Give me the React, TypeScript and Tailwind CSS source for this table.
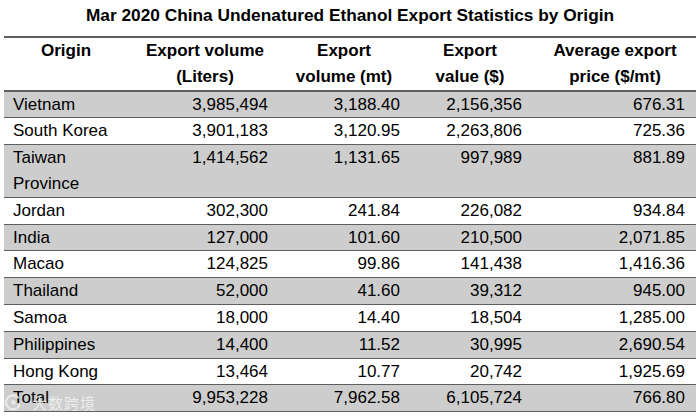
const rows = [
  ["Vietnam", "3,985,494", "3,188.40", "2,156,356", "676.31"],
  ["South Korea", "3,901,183", "3,120.95", "2,263,806", "725.36"],
  ["Taiwan Province", "1,414,562", "1,131.65", "997,989", "881.89"],
  ["Jordan", "302,300", "241.84", "226,082", "934.84"],
  ["India", "127,000", "101.60", "210,500", "2,071.85"],
  ["Macao", "124,825", "99.86", "141,438", "1,416.36"],
  ["Thailand", "52,000", "41.60", "39,312", "945.00"],
  ["Samoa", "18,000", "14.40", "18,504", "1,285.00"],
  ["Philippines", "14,400", "11.52", "30,995", "2,690.54"],
  ["Hong Kong", "13,464", "10.77", "20,742", "1,925.69"],
  ["Total", "9,953,228", "7,962.58", "6,105,724", "766.80"],
];

const App = () => {
  return (
    <div className="w-[700px] h-[417px] bg-white text-black font-['Liberation_Sans',Arial,sans-serif] relative overflow-hidden">
      <div className="h-[36px] text-center font-bold text-[17.3px] leading-[30px]">
        Mar 2020 China Undenatured Ethanol Export Statistics by Origin
      </div>

      <table className="ml-[4px] w-[692px] border-collapse table-fixed text-[17px] leading-[25.8px]">
        <colgroup>
          <col className="w-[124px]" />
          <col className="w-[154px]" />
          <col className="w-[124px]" />
          <col className="w-[128px]" />
          <col className="w-[162px]" />
        </colgroup>
        <thead>
          <tr className="border-t-2 border-b-2 border-[#5e5e5e] font-bold text-center align-top">
            <th className="h-[51px]">Origin</th>
            <th>
              Export volume
              <br />
              (Liters)
            </th>
            <th>
              Export
              <br />
              volume (mt)
            </th>
            <th>
              Export
              <br />
              value ($)
            </th>
            <th>
              Average export
              <br />
              price ($/mt)
            </th>
          </tr>
        </thead>
        <tbody>
          {rows.map((r, i) => (
            <tr
              key={i}
              className={`border-b border-[#5e5e5e] align-top ${i % 2 === 0 ? "bg-[#cdcdcd]" : "bg-white"}`}
            >
              <td className="pl-[9px]">
                {r[0] === "Taiwan Province" ? (
                  <>
                    Taiwan
                    <br />
                    Province
                  </>
                ) : (
                  r[0]
                )}
              </td>
              <td className="text-right pr-[14px]">{r[1]}</td>
              <td className="text-right pr-[6px]">{r[2]}</td>
              <td className="text-right pr-[12px]">{r[3]}</td>
              <td className="text-right pr-[11px]">{r[4]}</td>
            </tr>
          ))}
        </tbody>
      </table>

      {/* watermark */}
      <div className="absolute left-[5px] top-[394px] flex items-center gap-[10px] opacity-80">
        <svg width="17" height="17" viewBox="0 0 17 17" fill="none">
          <path d="M13 3.5 A7 7 0 1 0 14.5 11" stroke="#f2f2f2" strokeWidth="2.2" strokeLinecap="round" />
          <circle cx="8.5" cy="8.5" r="2.2" fill="#f2f2f2" />
        </svg>
        <span className="text-[15px] leading-[17px] text-[#f4f4f4] font-['Noto_Sans_CJK_SC',sans-serif] tracking-[1px]">
          大数跨境
        </span>
      </div>
    </div>
  );
};

export default App;
